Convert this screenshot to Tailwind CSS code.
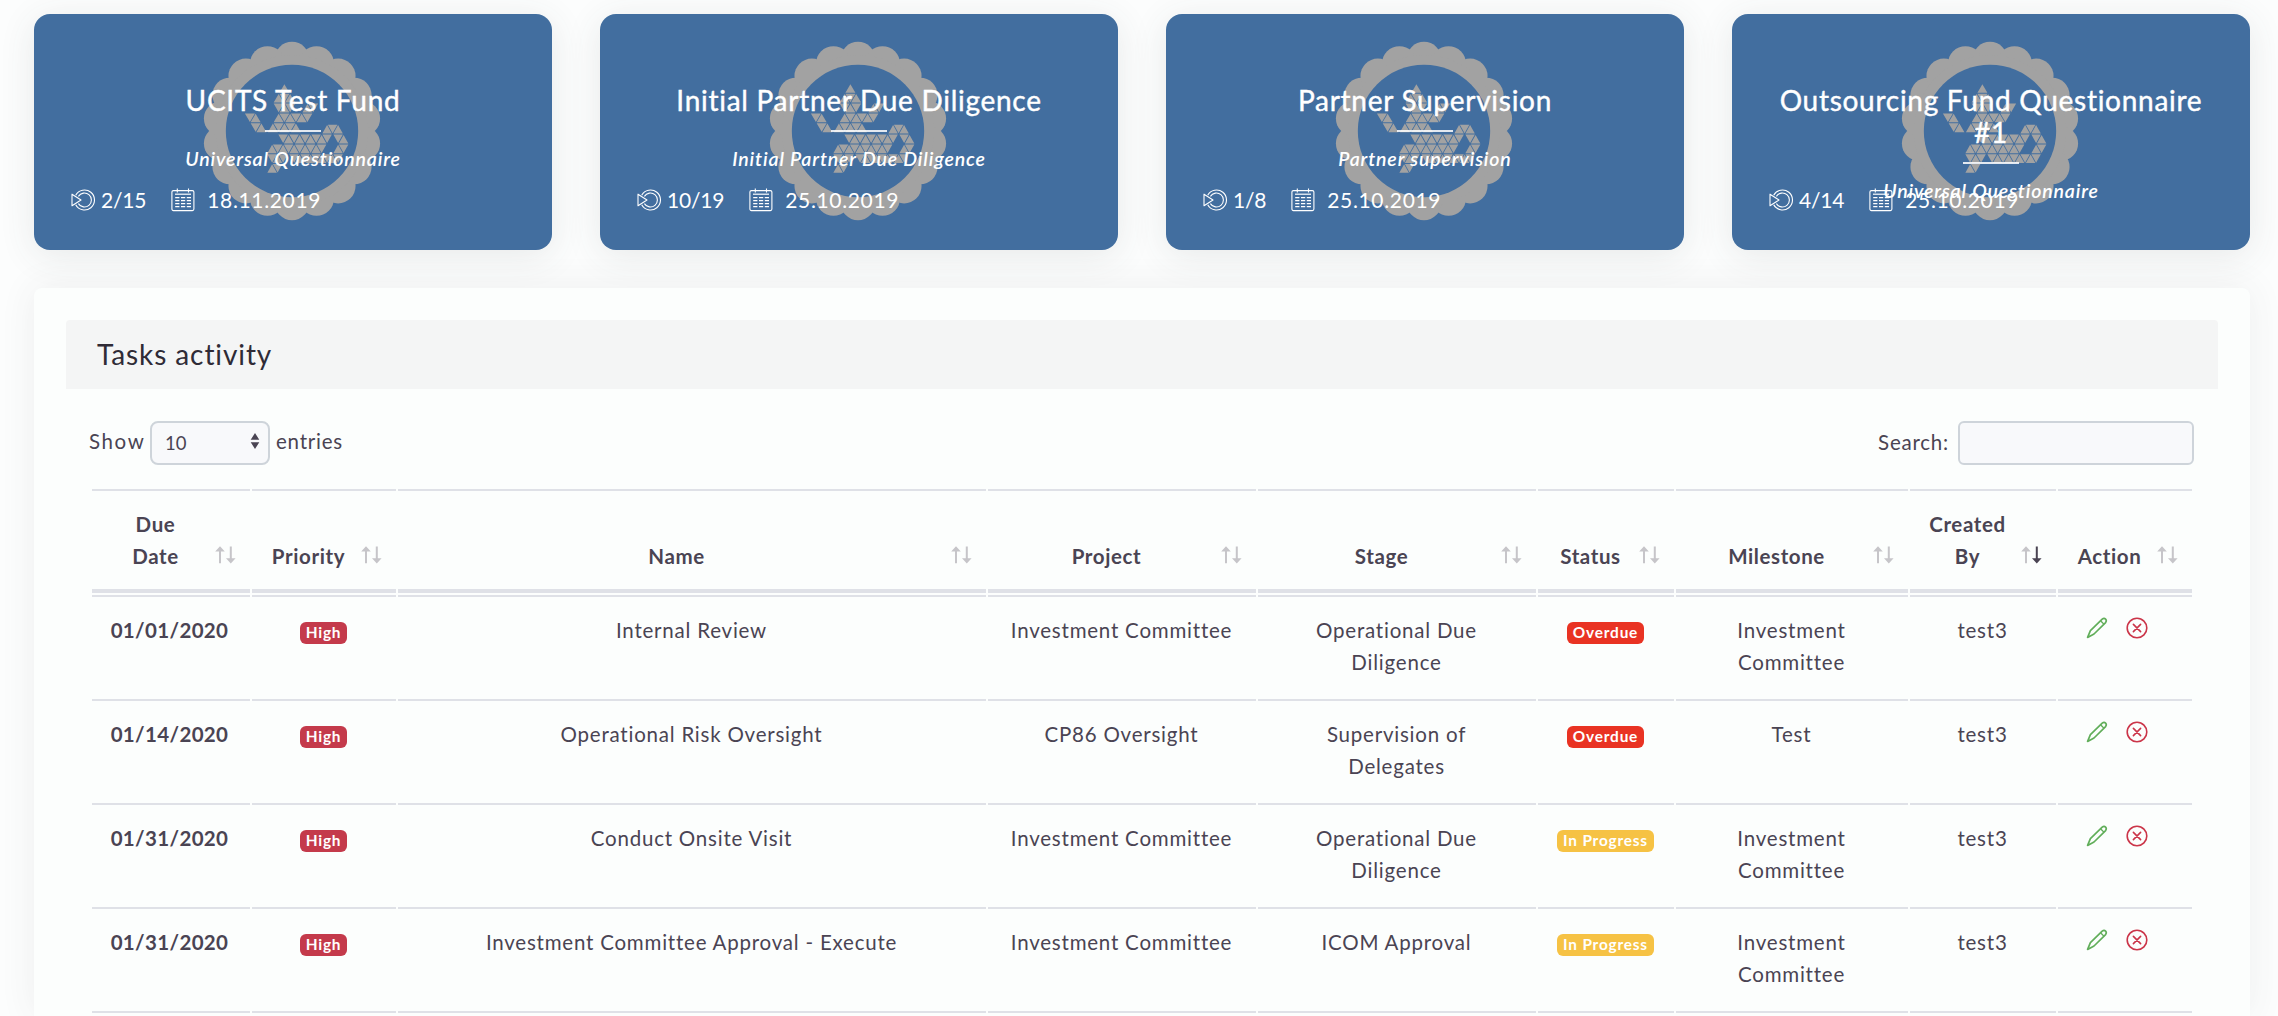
<!DOCTYPE html>
<html lang="en">
<head>
<meta charset="utf-8">
<title>Tasks activity</title>
<script src="https://cdn.jsdelivr.net/npm/@tailwindcss/browser@4"></script>
</head>
<body class="h-[1016px] overflow-hidden bg-[#fcfdfd] font-['Lato','Noto_Sans',sans-serif] text-[20.5px] leading-8 tracking-[0.78px] text-[#4a4453]">

<svg class="absolute size-0">
  <symbol id="seal" viewBox="0 0 180 180"><g id="seal-art" fill="#a2a2a2"></g></symbol>
  <symbol id="progress" viewBox="0 0 24 22">
    <g fill="none" stroke="#fff" stroke-width="1.1">
      <path d="M4.7 6.2a10 10 0 1 1 0 9.6M7.4 7.4a7 7 0 1 1 0 7.2"/>
      <path d="M1 5.2v11.6L10 11z" stroke-linejoin="round"/>
    </g>
  </symbol>
  <symbol id="calendar" viewBox="0 0 24 24">
    <g fill="none" stroke="#fff">
      <rect x=".9" y="2.6" width="22" height="20" rx="1.5" stroke-width="1.1"/>
      <path d="M6.3.4v4M17.5.4v4" stroke-width="1.1"/>
      <path d="M4 6.2h16" stroke-width="1.2"/>
      <path d="M4.2 9.6h15.8M4.2 12.6h15.8M4.2 15.6h15.8M4.2 18.6h15.8" stroke-width="1.4" stroke-dasharray="4.2 1.6"/>
    </g>
  </symbol>
  <symbol id="sort" viewBox="0 0 21 18">
    <path d="M5 .2L9.8 5.6H6V17.2H4V5.6H.2z"/>
    <path d="M15.8 17.6L11 12.2h3.8V.4h2v11.8h3.8z" class="fill-[var(--down,#c6c5c9)]"/>
  </symbol>
  <symbol id="pencil" viewBox="0 0 22 22">
    <g fill="none" stroke="#61ae5a" stroke-width="1.7" stroke-linejoin="round">
      <path d="M1.6 20.4L4.4 13.6 16.2 2.2c2.6-2 5.2.8 3.4 3.4L8 17z"/>
      <path d="M14.8 4l3.2 3.2" stroke-width="1.3"/>
    </g>
  </symbol>
  <symbol id="remove" viewBox="0 0 22 22">
    <g fill="none" stroke="#cb3549" stroke-width="1.6" stroke-linecap="round">
      <circle cx="11" cy="11" r="9.8"/>
      <path d="M7.4 7.4l7.2 7.2M14.6 7.4l-7.2 7.2"/>
    </g>
  </symbol>
</svg>

<main class="pl-[34px] pr-7 pt-[14px]">
  <section id="cards" class="grid grid-cols-4 gap-12"></section>

  <section class="mt-[38px] h-[728px] overflow-hidden rounded-t-lg bg-[#fcfefd] px-8 pt-8 shadow-[0_0_36px_rgba(60,70,70,0.08)]">
    <h2 class="h-[69px] rounded-t bg-[#f4f5f5] pl-[31px] text-[28px] leading-[68px] tracking-[0.9px] text-[#2f2b36]">Tasks activity</h2>

    <div class="mt-8 flex items-center justify-between pl-[23px] pr-6">
      <div class="flex items-center">
        <span class="-mt-[5px] w-[61px] tracking-[1.6px]">Show</span>
        <div class="flex h-11 w-[120px] items-center justify-between rounded-lg border-2 border-[#ced4da] bg-[#f8f9fb] pl-[13px] pr-2 text-[18.5px] tracking-[0px]">
          <span>10</span>
          <svg class="mb-1 h-4 w-[10px] fill-[#4a4453]" viewBox="0 0 10 16"><path d="M5 0l4.3 6.8H.7zM5 16l4.3-6.8H.7z"/></svg>
        </div>
        <span class="-mt-[5px] ml-1.5">entries</span>
      </div>
      <label class="flex items-center"><span class="-mt-[3px] mr-[9px]">Search:</span>
        <input class="h-11 w-[236px] rounded-md border-2 border-[#ced4da] bg-[#f8f9fb]">
      </label>
    </div>

    <div class="mt-6 ml-[26px] w-[2100px]">
      <div id="head" class="mb-0.5 grid grid-cols-[158px_144px_588px_268px_278px_136px_232px_146px_134px] gap-x-0.5 font-bold tracking-[0.6px]"></div>
      <div id="rows" class="flex flex-col gap-0.5"></div>
    </div>
  </section>
</main>

<script>
// Seal artwork: scalloped ring and a dragon assembled from small triangles.
const n = v => v.toFixed(2);
let scallops = '';
for (let i = 0; i < 18; i++) {
  const a = i * Math.PI / 9;
  scallops += `<circle cx="${n(90 + 71.8 * Math.sin(a))}" cy="${n(90 - 71.8 * Math.cos(a))}" r="17.4"/>`;
}
const art = `<mask id="hole"><rect width="180" height="180" fill="#fff"/><circle cx="90" cy="90" r="66.2" fill="#000"/></mask><g mask="url(#hole)">${scallops}<circle cx="90" cy="90" r="76"/></g>`;
function tri(x0, u, yTop, h, up, down) {
  let d = '';
  const g = 0.75, k = 0.5;
  up.forEach(j => { const x = x0 + j * u; d += `M${n(x)} ${n(yTop + k * 1.6)}L${n(x + u - g)} ${n(yTop + h - k)}H${n(x - u + g)}z`; });
  down.forEach(j => { const x = x0 + j * u; d += `M${n(x)} ${n(yTop + h - k * 1.6)}L${n(x + u - g)} ${n(yTop + k)}H${n(x - u + g)}z`; });
  return d;
}
const upper = [[[0], []], [[-1, 1], [0]], [[0, 4], [-1, 1, 5]], [[-5, -1, 1, 3], [-6, 0, 2, 4]], [[-4, -2, 0, 2], [-5, -1, 1]]];
const lower = [[[10, 12], [11]], [[3, 5, 7, 9, 13], [2, 4, 6, 8, 10, 12]], [[0, 2, 4, 6, 8, 12], [1, 3, 5, 7, 9, 13]], [[1, 5, 7, 9, 11], [0, 2, 4, 6, 8, 10, 12]], [[0], [1]]];
let d = '';
upper.forEach(([u, w], i) => d += tri(82.4, 5.75, 42.4 + i * 9.85, 9.85, u, w));
lower.forEach(([u, w], i) => d += tri(70.1, 5.5, 83.3 + i * 9.8, 9.8, u, w));
document.getElementById('seal-art').innerHTML = art + `<path d="${d}"/>`;

const cards = [
  ['UCITS Test Fund', 'Universal Questionnaire', '2/15', '18.11.2019'],
  ['Initial Partner Due Diligence', 'Initial Partner Due Diligence', '10/19', '25.10.2019'],
  ['Partner Supervision', 'Partner supervision', '1/8', '25.10.2019'],
  ['Outsourcing Fund Questionnaire #1', 'Universal Questionnaire', '4/14', '25.10.2019'],
];
document.getElementById('cards').innerHTML = cards.map(([title, kind, step, date]) => `
  <article class="relative h-[236px] rounded-2xl bg-[#426e9f] px-10 pt-[70px] text-center text-white shadow-[0_6px_36px_rgba(60,70,70,0.11)]">
    <svg class="absolute left-[168px] top-[27px] size-[180px]"><use href="#seal"/></svg>
    <h3 class="relative text-[28px] font-normal leading-8 tracking-[0.72px] [-webkit-text-stroke:0.4px_white]">${title}</h3>
    <div class="relative mx-auto mt-[14px] h-0.5 w-14 bg-white/85"></div>
    <p class="relative mt-[11px] text-[19.5px] font-semibold italic leading-8 tracking-[0.85px]">${kind}</p>
    <div class="absolute bottom-[38px] left-[37px] flex items-center text-[21px] leading-6">
      <svg class="h-[22px] w-6"><use href="#progress"/></svg>
      <span class="ml-[6px] tracking-[-0.2px]">${step}</span>
      <svg class="ml-[25px] size-6"><use href="#calendar"/></svg>
      <span class="ml-3 tracking-[0.65px]">${date}</span>
    </div>
  </article>`).join('');

const heads = ['Due<br>Date', 'Priority', 'Name', 'Project', 'Stage', 'Status', 'Milestone', 'Created<br>By', 'Action'];
document.getElementById('head').innerHTML = heads.map((h, i) => `
  <div class="relative flex h-[104px] items-end justify-center border-t-2 border-b-4 border-[#dfe1e7] pr-[31px] pb-[17px] text-center">
    <span>${h}</span>
    <svg class="absolute bottom-[25px] right-[14px] h-[18px] w-[21px] fill-[#c6c5c9] ${i === 7 ? '[--down:#4a4453]' : ''}"><use href="#sort"/></svg>
  </div>`).join('');

const rows = [
  ['01/01/2020', 'Internal Review', 'Investment Committee', 'Operational Due<br>Diligence', 'Overdue', 'Investment<br>Committee'],
  ['01/14/2020', 'Operational Risk Oversight', 'CP86 Oversight', 'Supervision of<br>Delegates', 'Overdue', 'Test'],
  ['01/31/2020', 'Conduct Onsite Visit', 'Investment Committee', 'Operational Due<br>Diligence', 'In Progress', 'Investment<br>Committee'],
  ['01/31/2020', 'Investment Committee Approval - Execute', 'Investment Committee', 'ICOM Approval', 'In Progress', 'Investment<br>Committee'],
];
const badge = (t, c) => `<span class="mt-[6px] inline-block h-[22px] rounded-md px-1.5 text-[15.4px] font-bold leading-[21px] tracking-[0.8px] text-white ${c}">${t}</span>`;
document.getElementById('rows').innerHTML = rows.map(([due, name, project, stage, status, milestone]) => {
  const cells = [
    `<b class="mr-0.5 tracking-[0.35px]">${due}</b>`, badge('High', 'bg-[#c43a4b]'), name, project, stage,
    badge(status, status === 'Overdue' ? 'bg-[#e93323]' : 'bg-[#f6c244]'), milestone, 'test3',
    `<span class="mr-[15px] mt-[3px] flex justify-center gap-[18px]"><svg class="size-[22px]"><use href="#pencil"/></svg><svg class="size-[22px]"><use href="#remove"/></svg></span>`,
  ];
  return `<div class="grid h-[102px] shrink-0 grid-cols-[158px_144px_588px_268px_278px_136px_232px_146px_134px] gap-x-0.5 text-center">` +
    cells.map(c => `<div class="border-t-2 border-[#dfe1e7] pr-px pt-[17px]"><div class="flex justify-center"><div>${c}</div></div></div>`).join('') + `</div>`;
}).join('') + `<div class="grid h-0.5 grid-cols-[158px_144px_588px_268px_278px_136px_232px_146px_134px] gap-x-0.5">${'<div class="bg-[#dfe1e7]"></div>'.repeat(9)}</div>`;
</script>
</body>
</html>
